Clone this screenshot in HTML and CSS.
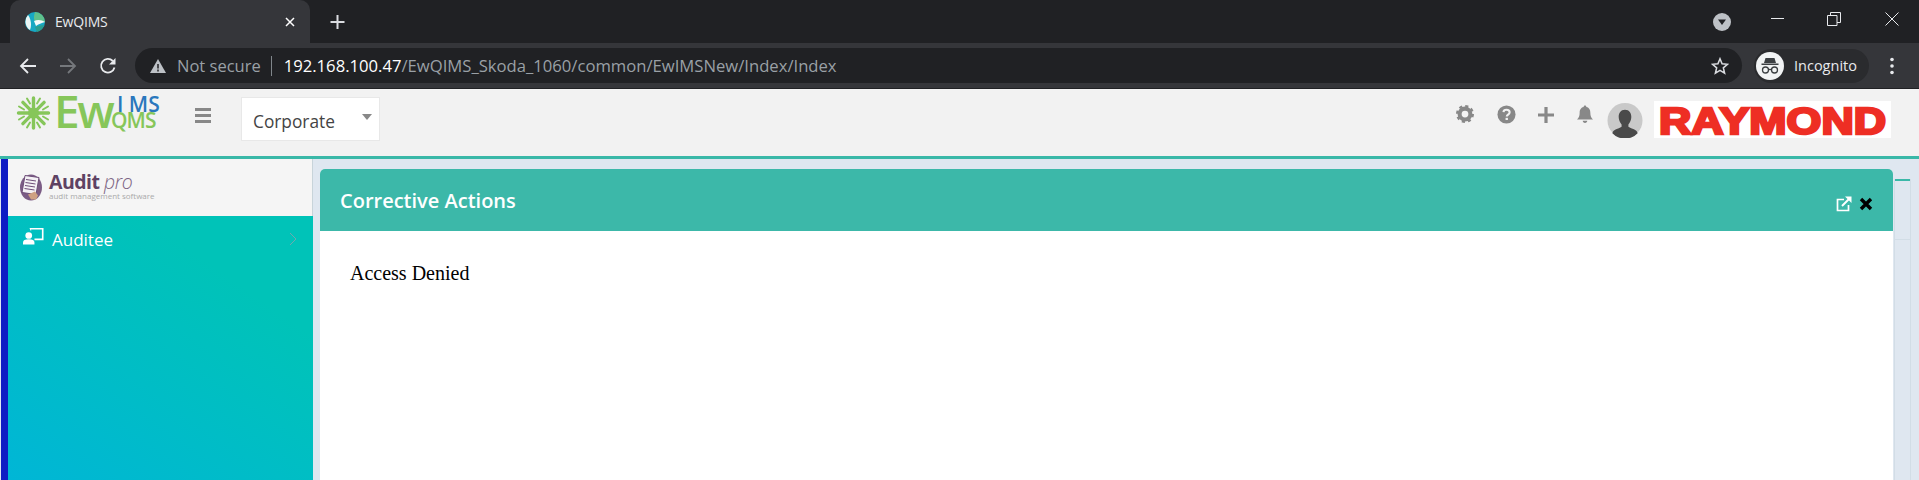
FILE: index.html
```html
<!DOCTYPE html>
<html lang="en">
<head>
<meta charset="utf-8">
<title>EwQIMS</title>
<link rel="stylesheet" href="styles.css">
</head>
<body>
<div class="tabstrip">
  <div class="tab">
    <svg class="favicon" viewBox="0 0 20 20"><circle cx="10" cy="10" r="10" fill="#17a8c4"/><path d="M10 0a10 10 0 0 1 10 10H12C9 10 8 6 10 0z" fill="#5fc08a"/><path d="M3 3c3 4 4 10 2 15a10 10 0 0 1-2-15z" fill="#eaf6f5"/><path d="M9 9c4-2 8-1 11 1-3 1-7 2-9 4z" fill="#f4fafa"/><path d="M10 15c3-1 6-2 9-2a10 10 0 0 1-7 7z" fill="#2a9d8f"/></svg>
    <span class="tab-title">EwQIMS</span>
    <svg class="tab-close" viewBox="0 0 10 10"><path d="M1 1l8 8M9 1l-8 8" stroke="#fff" stroke-width="1.5"/></svg>
  </div>
  <svg class="new-tab" viewBox="0 0 14 14"><path d="M7 0v14M0 7h14" stroke="#dadce0" stroke-width="2"/></svg>
  <div class="strip-right">
    <svg class="tab-search" viewBox="0 0 18 18"><circle cx="9" cy="9" r="9" fill="#bdc1c6"/><path d="M5 6.500h8L9 12z" fill="#202124"/></svg>
    <svg class="win-btn win-min" viewBox="0 0 14 14"><path d="M0 6.500h13" stroke="#e8eaed"/></svg>
    <svg class="win-btn win-max" viewBox="0 0 14 14"><path d="M.5 3.500h9.500v10H.5zM3.500 3.500V.5h10v10H10" fill="none" stroke="#e8eaed"/></svg>
    <svg class="win-btn win-close" viewBox="0 0 14 14"><path d="M.5.5l13 13M13.500.5l-13 13" stroke="#e8eaed"/></svg>
  </div>
</div>
<div class="toolbar">
  <svg class="nav" viewBox="0 0 18 18"><path d="M17 9H2M9 2L2 9l7 7" fill="none" stroke="#e8eaed" stroke-width="1.800"/></svg>
  <svg class="nav" viewBox="0 0 18 18"><path d="M1 9h15M9 2l7 7-7 7" fill="none" stroke="#75787c" stroke-width="1.800"/></svg>
  <svg class="nav" viewBox="0 0 18 18"><path d="M15.500 10.500A6.800 6.800 0 1 1 13.800 4" fill="none" stroke="#e8eaed" stroke-width="1.800"/><path d="M16.500 1v6.500H10z" fill="#e8eaed"/></svg>
  <div class="omnibox">
    <svg class="warn" viewBox="0 0 16 14"><path d="M8 0l8 14H0z" fill="#bdc1c6"/><path d="M8 5v4.500M8 10.500v2" stroke="#202124" stroke-width="1.500"/></svg>
    <span class="not-secure">Not secure</span>
    <span class="omni-sep"></span>
    <span class="url"><b>192.168.100.47</b>/EwQIMS_Skoda_1060/common/EwIMSNew/Index/Index</span>
    <svg class="star" viewBox="0 0 20 20"><path d="M10 2l2.300 5.600 6 .5-4.600 3.900 1.400 5.900-5.100-3.100-5.100 3.100 1.400-5.900L1.700 8.100l6-.5z" fill="none" stroke="#dadce0" stroke-width="1.700"/></svg>
  </div>
  <div class="incognito">
    <svg class="inc-icon" viewBox="0 0 28 28"><circle cx="14" cy="14" r="14" fill="#f1f3f4"/><path d="M9.500 6h9l1.500 5H8zM5.500 11.500h17v1.500h-17z" fill="#3c4043"/><circle cx="9.500" cy="18" r="3" fill="none" stroke="#3c4043" stroke-width="1.300"/><circle cx="18.500" cy="18" r="3" fill="none" stroke="#3c4043" stroke-width="1.300"/><path d="M12.500 17.500h3" stroke="#3c4043" stroke-width="1.300"/></svg>
    <span>Incognito</span>
  </div>
  <svg class="kebab" viewBox="0 0 4 18"><circle cx="2" cy="2.500" r="1.800" fill="#e8eaed"/><circle cx="2" cy="9" r="1.800" fill="#e8eaed"/><circle cx="2" cy="15.500" r="1.800" fill="#e8eaed"/></svg>
</div>
<header class="app-header">
  <svg class="ew-logo" viewBox="0 0 146 50">
    <g stroke="#86c65a" stroke-linecap="round">
      <path stroke-width="3.400" d="M17.500 8v30M2.500 23h30M6.900 12.400l21.200 21.200M28.100 12.400L6.900 33.600"/>
      <path stroke-width="2" d="M11 8.500l3 5M24 8.500l-3 5M11 37.500l3-5M24 37.500l-3-5M3 16.500l5 3M3 29.500l5-3M32 16.500l-5 3M32 29.500l-5-3"/>
    </g>
    <circle cx="17.500" cy="23" r="5.500" fill="#86c65a"/>
    <text class="ew-big" x="38" y="38">Ew</text>
    <text class="ew-ims" x="101" y="22">I MS</text>
    <text class="ew-qms" x="95" y="38">QMS</text>
  </svg>
  <div class="hamburger"><i></i><i></i><i></i></div>
  <div class="select"><span>Corporate</span><i class="caret"></i></div>
  <div class="header-right">
    <svg class="hicon gear" viewBox="0 0 20 20"><circle cx="10" cy="10" r="6" fill="none" stroke="#888" stroke-width="4.500"/><circle cx="10" cy="10" r="8.800" fill="none" stroke="#888" stroke-width="2.400" stroke-dasharray="3.500 3.410"/></svg>
    <svg class="hicon help" viewBox="0 0 20 20"><circle cx="10" cy="10" r="9.500" fill="#888"/><path d="M6.800 7.500C7 5.500 8.500 5 10 5c2 0 3.300 1.100 3.300 2.700 0 2.400-3 2.300-3 4.300" fill="none" stroke="#f2f2f2" stroke-width="2.200"/><rect x="9" y="13.500" width="2.500" height="2.300" fill="#f2f2f2"/></svg>
    <svg class="hicon plus" viewBox="0 0 16 16"><path d="M8 0v16M0 8h16" stroke="#888" stroke-width="3.200"/></svg>
    <svg class="hicon bell" viewBox="0 0 18 20"><path d="M9 0c1 0 1.500.7 1.500 1.500C14 2.300 15 5 15 8c0 4 1 5.500 3 7.500H0C2 13.500 3 12 3 8c0-3 1-5.700 4.500-6.500C7.500.7 8 0 9 0z" fill="#888"/><path d="M6.500 17h5c0 1.500-1 2.500-2.500 2.500S6.500 18.500 6.500 17z" fill="#888"/></svg>
    <svg class="avatar" viewBox="0 0 36 36"><circle cx="18" cy="18" r="18" fill="#c9c9c9"/><path d="M18 7c4.500 0 6.500 3.500 6.500 7.500 0 3-1.500 6-3 7.500v2.500C25 27 30 27 31 31a18 18 0 0 1-26 0c1-4 6-4 9.500-6.500V22c-1.500-1.500-3-4.500-3-7.500C11.500 10.500 13.500 7 18 7z" fill="#4a4a4a"/></svg>
    <div class="raymond"><svg viewBox="0 0 237 47"><text x="5" y="38" textLength="227" lengthAdjust="spacingAndGlyphs">RAYMOND</text></svg></div>
  </div>
</header>
<div class="layout">
  <div class="blue-rail"></div>
  <aside class="sidebar">
    <div class="brand">
      <svg class="audit-icon" viewBox="0 0 24 28"><ellipse cx="12" cy="15" rx="11" ry="13" fill="#7b5c85"/><path d="M6 3l14 2-3 17-14-2z" fill="#f4f1f5" stroke="#6d4d78"/><path d="M7 7l10 1.500M6.500 10l10 1.500M6 13l10 1.500M5.500 16l10 1.500" stroke="#6d4d78"/><path d="M9 22l7-3 3 4-2 4h-5z" fill="#cfa183"/></svg>
      <div class="audit-text">
        <div class="audit-name"><b>Audit</b> <em>pro</em></div>
        <div class="audit-sub">audit management software</div>
      </div>
    </div>
    <nav class="side-menu">
      <div class="side-item">
        <svg class="side-icon" viewBox="0 0 22 18"><path d="M7 1.500V.5h14.500v13H12v-1.800h7.800V2.200H8.500V4z" fill="#fff"/><circle cx="6" cy="8.500" r="3.500" fill="#fff"/><path d="M0 18v-2c0-2.500 2-3.500 6-3.500s6 1 6 3.500v2z" fill="#fff"/></svg>
        <span>Auditee</span>
        <svg class="chev" viewBox="0 0 8 14"><path d="M1 1l6 6-6 6" fill="none" stroke="#6fa9ae"/></svg>
      </div>
    </nav>
  </aside>
  <main class="main">
    <section class="panel">
      <div class="panel-head">
        <h1>Corrective Actions</h1>
        <div class="panel-tools">
          <svg class="ext" viewBox="0 0 16 16"><path d="M12.500 9v5.500H1.500v-11H8" fill="none" stroke="#fff" stroke-width="1.700"/><path d="M6 10l7-7" stroke="#fff" stroke-width="2"/><path d="M9 .5h6.500V7z" fill="#fff"/></svg>
          <svg class="cls" viewBox="0 0 14 14"><path d="M2 2l10 10M12 2L2 12" stroke="#000" stroke-width="3.400"/></svg>
        </div>
      </div>
      <div class="panel-body">Access Denied</div>
    </section>
    <div class="side-strip"><i></i><b></b></div>
  </main>
</div>
</body>
</html>
```
FILE: styles.css
```css
* { box-sizing: border-box; }
html, body { margin: 0; height: 480px; overflow: hidden; }
body { font-family: "Open Sans", sans-serif; background: #dfe7f0; width: 1919px; }
svg { display: block; flex: none; }

.tabstrip { height: 43px; background: #202124; display: flex; align-items: flex-start; padding-left: 10px; }
.tab { width: 300px; height: 43px; background: #35363a; border-radius: 10px 10px 0 0; display: flex; align-items: center; padding: 0 8px 0 15px; }
.favicon { width: 20px; height: 20px; }
.tab-title { font: 14px "Open Sans", sans-serif; letter-spacing: -.2px; color: #e8eaed; margin-left: 10px; flex: 1; }
.tab-close { width: 10px; height: 10px; margin-right: 7px; }
.new-tab { width: 15px; height: 14px; margin: 15px 0 0 20px; }
.strip-right { margin-left: auto; display: flex; align-items: center; height: 37px; }
.tab-search { width: 18px; height: 18px; margin-top: 7px; }
.win-btn { width: 14px; height: 14px; }
.win-min { margin-left: 40px; }
.win-max { margin-left: 42px; }
.win-close { margin: 0 20px 0 44px; }

.toolbar { height: 46px; background: #35363a; display: flex; align-items: center; border-bottom: 1px solid #202124; padding: 0 0 0 19px; }
.nav { width: 18px; height: 18px; }
.nav + .nav { margin-left: 22px; }
.omnibox { width: 1607px; height: 35px; margin-left: 18px; border-radius: 18px; background: #202124; display: flex; align-items: center; padding: 0 13px 0 15px; }
.warn { width: 16px; height: 14px; }
.not-secure { font-size: 16.500px; color: #9aa0a6; margin-left: 11px; }
.omni-sep { width: 1px; height: 20px; background: #80868b; margin: 0 12px 0 10px; }
.url { font-size: 16.650px; color: #9aa0a6; flex: 1; white-space: nowrap; }
.url b { font-weight: 400; color: #fff; }
.star { width: 18px; height: 18px; }
.incognito { width: 115px; height: 34px; margin-left: 12px; border-radius: 17px; background: #2a2b2e; display: flex; align-items: center; padding-left: 2px; color: #e8eaed; font-size: 14.500px; }
.inc-icon { width: 28px; height: 28px; margin-right: 10px; }
.kebab { width: 4px; height: 18px; margin-left: 21px; }

.app-header { height: 70px; background: #f2f2f2; border-bottom: 3px solid #3ab8a8; display: flex; align-items: flex-start; }
.ew-logo { width: 146px; height: 50px; margin: 1px 0 0 16px; }
.ew-big { font: 600 46px "Open Sans", sans-serif; fill: #86c65a; letter-spacing: -2.500px; }
.ew-ims { font: 600 21px "Open Sans", sans-serif; fill: #2a77bd; }
.ew-qms { font: 600 21px "Open Sans", sans-serif; fill: #86c65a; letter-spacing: -1px; }
.hamburger { width: 16px; margin: 19px 0 0 33px; display: flex; flex-direction: column; gap: 3px; }
.hamburger i { display: block; height: 3px; background: #888; }
.select { width: 139px; height: 44px; margin: 8px 0 0 30px; background: #fff; border: 1px solid #e8e8e8; display: flex; align-items: center; padding: 4px 7px 0 11px; justify-content: space-between; font-size: 17.300px; color: #444; }
.caret { border: 5px solid transparent; border-top: 6px solid #888; border-bottom: 0; margin-bottom: 8px; }
.header-right { margin-left: auto; display: flex; align-items: flex-start; padding-right: 28px; }
.hicon { margin-top: 16px; }
.gear { width: 18px; height: 18px; margin-right: 23px; }
.help { width: 19px; height: 19px; margin-right: 22px; }
.plus { width: 16px; height: 16px; margin-top: 18px; margin-right: 23px; }
.bell { width: 16px; height: 19px; margin-right: 14px; }
.avatar { width: 36px; height: 35px; margin-top: 14px; margin-right: 11px; }
.raymond { width: 237px; height: 37px; margin-top: 12px; background: #fff; }
.raymond svg { width: 237px; height: 47px; margin: -5px 0; }
.raymond text { font: 700 37px "Liberation Sans", sans-serif; fill: #ee2e24; stroke: #ee2e24; stroke-width: 2.500px; }

.layout { height: 321px; display: flex; padding-left: 1px; }
.blue-rail { width: 7px; background: #0e1cc4; }
.sidebar { width: 305px; display: flex; flex-direction: column; }
.brand { height: 57px; background: #f5f5f5; border-right: 1px solid #c8d4da; display: flex; align-items: center; padding: 0 0 3px 11px; }
.audit-icon { width: 24px; height: 29px; }
.audit-text { margin-left: 6px; color: #5e4263; }
.audit-name { font-size: 19.500px; line-height: 19px; letter-spacing: -.5px; }
.audit-name b { font-weight: 700; }
.audit-name em { font-weight: 300; font-style: italic; color: #7c6483; }
.audit-sub { font-size: 8px; line-height: 9px; color: #aaa; white-space: nowrap; }
.side-menu { flex: 1; background: linear-gradient(215deg, #00c3b8 25%, #00b6d6 100%); }
.side-item { display: flex; align-items: center; height: 46px; padding: 0 16px 0 15px; color: #fff; font-size: 17px; }
.side-icon { width: 21px; height: 18px; margin-bottom: 6px; }
.side-item span { margin-left: 8px; flex: 1; }
.chev { width: 8px; height: 14px; margin-bottom: 1px; }

.main { flex: 1; display: flex; padding: 10px 0 0 7px; align-items: flex-start; min-width: 0; }
.panel { width: 1573px; height: 311px; background: #fff; border-radius: 5px 5px 0 0; overflow: hidden; }
.panel-head { height: 62px; background: #3cb8a9; display: flex; align-items: center; justify-content: space-between; padding: 0 20px 0 20px; }
.panel-head h1 { margin: 0; font: 600 20px "Open Sans", sans-serif; color: #fff; }
.panel-tools { display: flex; gap: 7px; align-items: center; margin-top: 8px; }
.ext { width: 16px; height: 16px; }
.cls { width: 14px; height: 14px; }
.panel-body { padding: 32px 30px; font: 20px/20px "Liberation Serif", serif; color: #000; }
.side-strip { width: 17px; height: 301px; margin: 10px 0 0 1px; border-right: 1px solid #d2dde6; border-left: 1px solid #d2dde6; }
.side-strip i { display: block; height: 2px; background: #3ab8a8; }
.side-strip b { display: block; height: 1px; margin-top: 58px; background: #d2dde6; }
```
